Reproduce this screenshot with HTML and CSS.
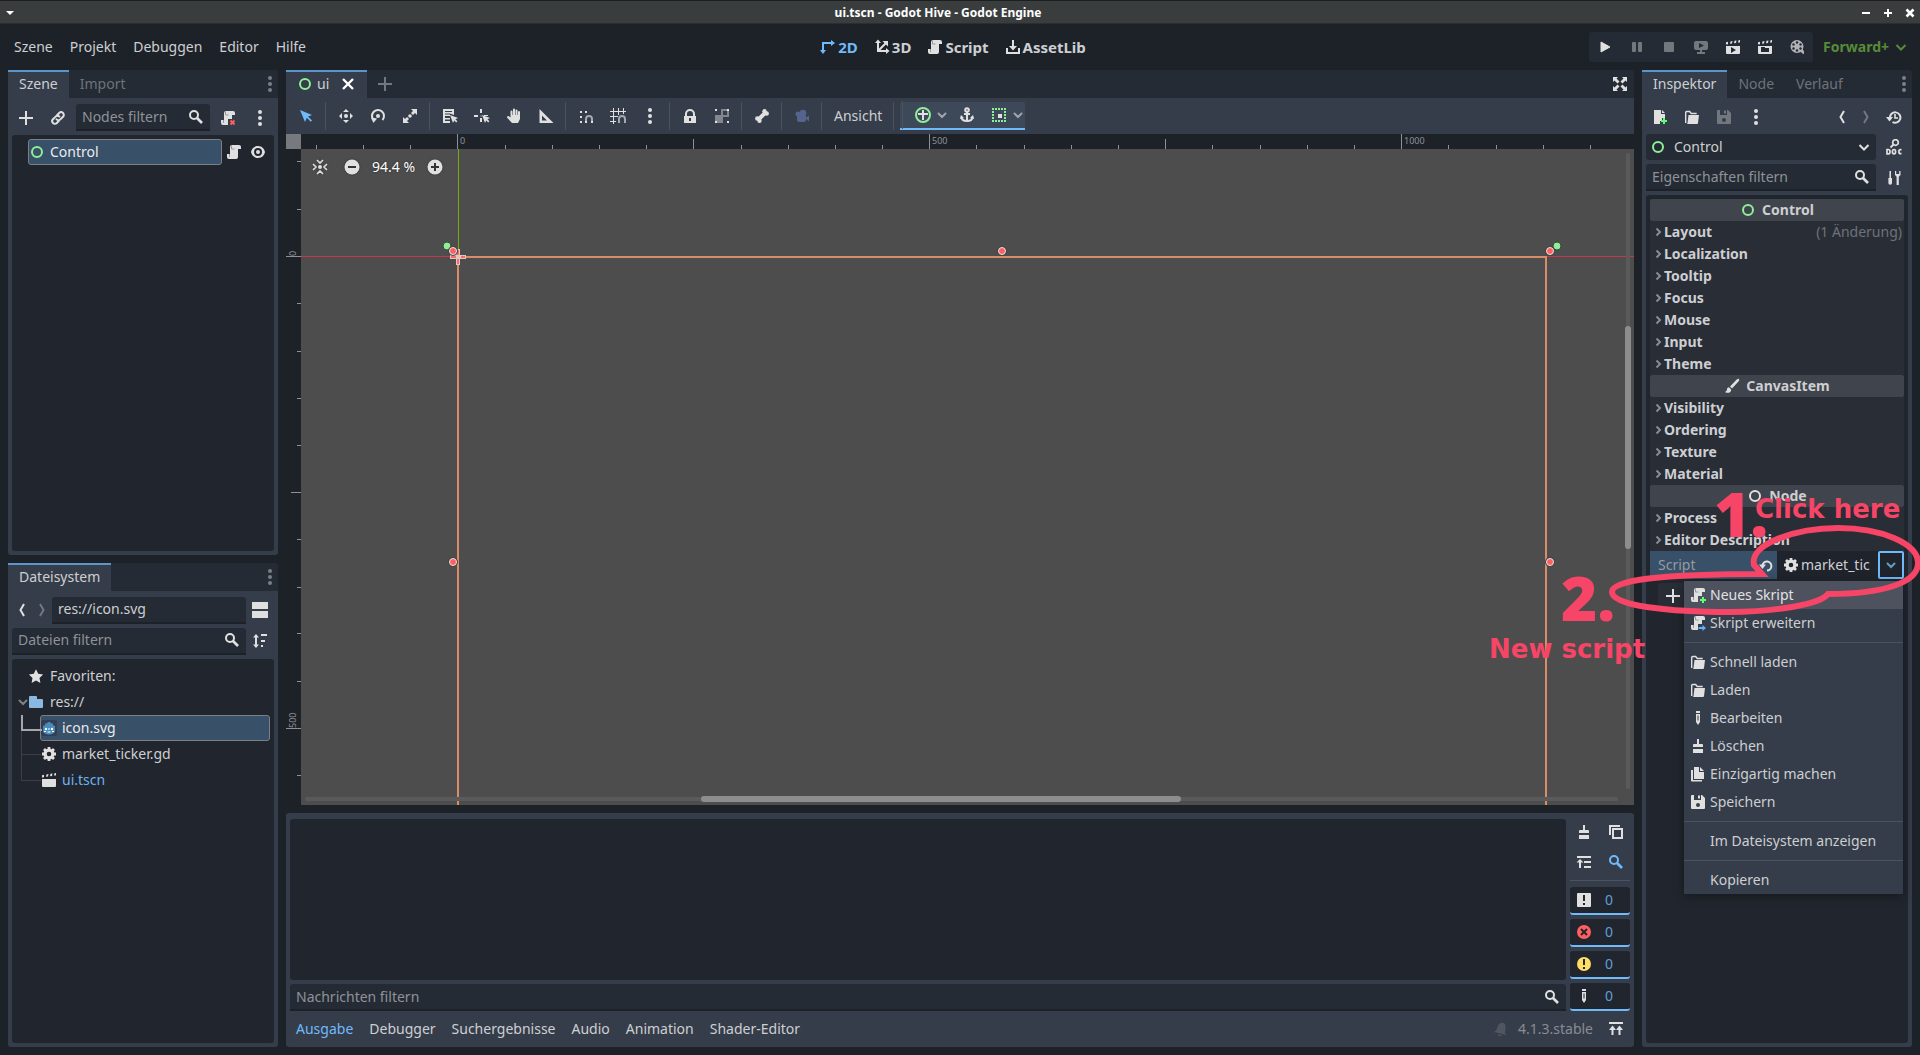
FILE: index.html
```html
<!DOCTYPE html>
<html lang="de">
<head>
<meta charset="utf-8">
<title>ui.tscn - Godot Hive - Godot Engine</title>
<link rel="stylesheet" href="styles.css">
</head>
<body>
<svg class="sprite" aria-hidden="true">
  <symbol id="ring" viewBox="0 0 16 16"><circle cx="8" cy="8" r="5" fill="none" stroke="currentColor" stroke-width="2"/></symbol>
  <symbol id="add" viewBox="0 0 16 16"><path d="M7 1v6H1v2h6v6h2V9h6V7H9V1z"/></symbol>
  <symbol id="close" viewBox="0 0 16 16"><path d="M3 3l10 10M13 3L3 13" fill="none" stroke="currentColor" stroke-width="2.4"/></symbol>
  <symbol id="link" viewBox="0 0 16 16"><g fill="none" stroke="currentColor" stroke-width="2" stroke-linecap="round"><path d="M7.2 5l2-2a2.6 2.6 0 0 1 3.8 3.8l-2.6 2.6a2.6 2.6 0 0 1-3.8 0"/><path d="M8.8 11l-2 2A2.6 2.6 0 0 1 3 9.200l2.600-2.600a2.600 2.600 0 0 1 3.800 0"/></g></symbol>
  <symbol id="search" viewBox="0 0 16 16"><g fill="none" stroke="currentColor"><circle cx="6" cy="6" r="4" stroke-width="2"/><path d="M9 9l5 5" stroke-width="2.600"/></g></symbol>
  <symbol id="script" viewBox="0 0 16 16"><path d="M6 1a2 2 0 0 0-2 2v7H1v3a2 2 0 0 0 2 2h7a2 2 0 0 0 2-2V5h3V3a2 2 0 0 0-2-2z"/><path d="M5.500 1.500v3.500h3M3.500 10v3" fill="none" stroke="#999" stroke-width="1"/></symbol>
  <symbol id="scriptx" viewBox="0 0 16 16"><path d="M6 1a2 2 0 0 0-2 2v7H1v3a2 2 0 0 0 2 2h5V9h4V5h3V3a2 2 0 0 0-2-2z"/><path d="M5.500 1.500v3.500h3M3.500 10v3" fill="none" stroke="#999"/><path d="M10.500 10.500l4 4m0-4l-4 4" fill="none" stroke="#ff5f5f" stroke-width="2"/></symbol>
  <symbol id="scriptadd" viewBox="0 0 16 16"><path d="M6 1a2 2 0 0 0-2 2v7H1v3a2 2 0 0 0 2 2h5V9h4V5h3V3a2 2 0 0 0-2-2z"/><path d="M5.500 1.500v3.500h3M3.500 10v3" fill="none" stroke="#999"/><path d="M13 10v6m-3-3h6" fill="none" stroke="#5fff75" stroke-width="2"/></symbol>
  <symbol id="scriptext" viewBox="0 0 16 16"><path d="M6 1a2 2 0 0 0-2 2v7H1v3a2 2 0 0 0 2 2h5V9h4V5h3V3a2 2 0 0 0-2-2z"/><path d="M5.500 1.500v3.500h3M3.500 10v3" fill="none" stroke="#999"/><path d="M8.500 12h4v-2l3.500 3-3.500 3v-2h-4z" fill="#5fb2ff"/></symbol>
  <symbol id="dots" viewBox="0 0 16 16"><circle cx="8" cy="2" r="2"/><circle cx="8" cy="8" r="2"/><circle cx="8" cy="14" r="2"/></symbol>
  <symbol id="eye" viewBox="0 0 16 16"><path d="M8 2C4 2 1.600 5 1 8c.6 3 3 6 7 6s6.400-3 7-6c-.6-3-3-6-7-6zm0 2a4 4 0 0 1 0 8 4 4 0 0 1 0-8z"/><circle cx="8" cy="8" r="2"/></symbol>
  <symbol id="prev" viewBox="0 0 16 16"><path d="M10 2L6.500 8 10 14" fill="none" stroke="currentColor" stroke-width="2"/></symbol>
  <symbol id="next" viewBox="0 0 16 16"><path d="M6 2l3.500 6L6 14" fill="none" stroke="currentColor" stroke-width="2"/></symbol>
  <symbol id="caret" viewBox="0 0 12 12"><path d="M2.500 4.500L6 8l3.500-3.500" fill="none" stroke="currentColor" stroke-width="2" stroke-linecap="round"/></symbol>
  <symbol id="chevron" viewBox="0 0 16 16"><path d="M3.500 6L8 10.500 12.500 6" fill="none" stroke="currentColor" stroke-width="2"/></symbol>
  <symbol id="fold" viewBox="0 0 12 12"><path d="M4.500 2.500L8 6 4.500 9.500" fill="none" stroke="currentColor" stroke-width="2"/></symbol>
  <symbol id="split" viewBox="0 0 16 16"><path d="M0 0h16v7H0zM0 9h16v7H0z"/></symbol>
  <symbol id="sort" viewBox="0 0 16 16"><path d="M4 1l3 3.500H5v7h2L4 15l-3-3.500h2v-7H1zM9 1h6v2H9zM9 7h4v2H9zM9 12h2v2H9z"/></symbol>
  <symbol id="star" viewBox="0 0 16 16"><path d="M8 1.200l2.200 4.500 4.900.7-3.600 3.500.9 5L8 12.500l-4.400 2.400.9-5L.9 6.400l4.900-.7z"/></symbol>
  <symbol id="folder" viewBox="0 0 16 16"><path d="M2 2a1 1 0 0 0-1 1v10a1 1 0 0 0 1 1h12a1 1 0 0 0 1-1V6a1 1 0 0 0-1-1H9V3a1 1 0 0 0-1-1z"/></symbol>
  <symbol id="godot" viewBox="0 0 16 16"><rect width="16" height="16" rx="2" fill="#363d52"/><path d="M2 6l2-1 .5-2 1.500.6L7 2h2l1 1.600 1.500-.6.5 2 2 1v5c0 2-3 3.500-6 3.500S2 13 2 11z" fill="#478cbf"/><circle cx="5" cy="9" r="1.200" fill="#fff"/><circle cx="11" cy="9" r="1.200" fill="#fff"/><path d="M8 8v2M3 11.500h2m1.500.5h3m1.500-.5h2" stroke="#fff" fill="none"/></symbol>
  <symbol id="gear" viewBox="0 0 16 16"><circle cx="8" cy="8" r="3.900" fill="none" stroke="currentColor" stroke-width="3.200"/><path d="M8 1v3M8 12v3M1 8h3M12 8h3M3 3l2 2M11 11l2 2M13 3l-2 2M5 11l-2 2" fill="none" stroke="currentColor" stroke-width="2.800"/></symbol>
  <symbol id="scene" viewBox="0 0 16 16"><path d="M1 7h14v7a1 1 0 0 1-1 1H2a1 1 0 0 1-1-1zM1 5.500V3.200l2-.4v2.400zM5 4.800l.5-2.400 2-.3L7 4.500zM9 4.200l.5-2.400 2-.3-.5 2.400zM13 3.600l.5-2.400 1.500-.2v2.400z"/></symbol>
  <symbol id="cursor" viewBox="0 0 16 16"><path d="M2 2l5 12 1.800-4.200 4 4 1.200-1.200-4-4L14 7z"/></symbol>
  <symbol id="move" viewBox="0 0 16 16"><path d="M8 1L5 4h6zM8 15l-3-3h6zM1 8l3-3v6zM15 8l-3-3v6z"/><circle cx="8" cy="8" r="2"/></symbol>
  <symbol id="rotate" viewBox="0 0 16 16"><path d="M4 12.500A6 6 0 1 1 12.500 12" fill="none" stroke="currentColor" stroke-width="2"/><path d="M1 9.500l6 1-3.500 4.500z"/><circle cx="8" cy="8" r="2"/></symbol>
  <symbol id="scale" viewBox="0 0 16 16"><path d="M9 1h6v6l-2-2-2 2-2-2 2-2zM7 15H1V9l2 2 2-2 2 2-2 2z"/><circle cx="8" cy="8" r="1.800"/></symbol>
  <symbol id="list" viewBox="0 0 16 16"><path d="M1 1h11v6L8 5.500H3v1h5V8H3v2h5v1.500H3V13h5v2H1zM3 3v1h7V3z" fill-rule="evenodd"/><path d="M8 7l3 8 1.200-2.600 2 2 1.200-1.200-2-2L16 10z"/></symbol>
  <symbol id="pivot" viewBox="0 0 16 16"><path d="M6 1h2v4H6zM0 7h4v2H0zM10 7h4v1h-4zM6 10h2v4H6zM6.500 7.500h1v1h-1z"/><path d="M8 7l3 8 1.200-2.600 2 2 1.200-1.200-2-2L16 10z"/></symbol>
  <symbol id="hand" viewBox="0 0 16 16"><path d="M7 1.500a1 1 0 0 1 2 0V7h.5V2.500a1 1 0 0 1 2 0V7h.5V4a1 1 0 0 1 2 0v7l-2 4H6L1.200 9.800a1.200 1.200 0 0 1 1.800-1.500L4.500 9.500V3.500a1 1 0 0 1 2 0V7H7z"/></symbol>
  <symbol id="ruler" viewBox="0 0 16 16"><path d="M1.500 1v14h14zM4 7.500l5 5H4z" fill-rule="evenodd"/></symbol>
  <symbol id="snap" viewBox="0 0 16 16"><path d="M2 3h2v2H2zM7 3h2v2H7zM2 8h2v2H2zM2 13h2v2H2z"/><path d="M8 15v-4a3 3 0 0 1 6 0v4" fill="none" stroke="#a5a8ae" stroke-width="2"/><path d="M7 13h2v2H7zM13 13h2v2h-2z"/></symbol>
  <symbol id="grid" viewBox="0 0 16 16"><path d="M0 3.500h16M0 8.500h8M0 13.500h6M3.500 0v16M8.500 0v7M13.500 0v6" fill="none" stroke="currentColor"/><path d="M9 15v-4a3 3 0 0 1 6 0v4" fill="none" stroke="#a5a8ae" stroke-width="2"/></symbol>
  <symbol id="lock" viewBox="0 0 16 16"><path d="M8 1a5 5 0 0 0-5 5v2H2v7h12V8h-1V6a5 5 0 0 0-5-5zm0 2a3 3 0 0 1 3 3v2H5V6a3 3 0 0 1 3-3zM7 10h2v3H7z" fill-rule="evenodd"/></symbol>
  <symbol id="group" viewBox="0 0 16 16"><path d="M7 1h8v8H9v6H1V7h6zM9 3v4h4V3z" opacity=".45" fill-rule="evenodd"/><path d="M1 1h2v2H1zM13 1h2v2h-2zM1 13h2v2H1zM13 13h2v2h-2z"/></symbol>
  <symbol id="bone" viewBox="0 0 16 16"><path d="M4.500 11.500l7-7" stroke="currentColor" stroke-width="4"/><circle cx="3.300" cy="10.500" r="2.200"/><circle cx="5.500" cy="12.700" r="2.200"/><circle cx="10.500" cy="3.300" r="2.200"/><circle cx="12.700" cy="5.500" r="2.200"/></symbol>
  <symbol id="camera" viewBox="0 0 16 16"><circle cx="4" cy="6" r="2.500"/><circle cx="9" cy="5" r="3.300"/><rect x="3" y="6" width="9" height="8" rx="2"/><path d="M11 10l4-2.500v6z"/></symbol>
  <symbol id="anchors" viewBox="0 0 16 16"><circle cx="8" cy="8" r="7" fill="none" stroke="#8eef97" stroke-width="2"/><path d="M7 3h2v3h4v2H9v5H7V8H3V6h4z"/></symbol>
  <symbol id="anchor" viewBox="0 0 16 16"><g fill="none" stroke="currentColor" stroke-width="2"><circle cx="8" cy="3" r="1.800"/><path d="M8 5v9M5 7h6M2.500 9.500c0 3 2.500 4.500 5.500 4.500s5.500-1.500 5.500-4.500"/></g><path d="M1 12l1-4 3 3zM15 12l-1-4-3 3z"/></symbol>
  <symbol id="container" viewBox="0 0 16 16"><path d="M1 1h2v2H1zM4 1h2v2H4zM7 1h2v2H7zM10 1h2v2h-2zM13 1h2v2h-2zM1 4h2v2H1zM1 7h2v2H1zM1 10h2v2H1zM13 4h2v2h-2zM13 7h2v2h-2zM13 10h2v2h-2zM1 13h2v2H1zM4 13h2v2H4zM7 13h2v2H7zM10 13h2v2h-2zM13 13h2v2h-2z" fill="#8eef97"/><path d="M7 7h4v4H7z"/></symbol>
  <symbol id="expand" viewBox="0 0 16 16"><path d="M1 1h5L4.500 2.500l3 3-2 2-3-3L1 6zM15 1v5l-1.500-1.500-3 3-2-2 3-3L10 1zM1 15v-5l1.500 1.500 3-3 2 2-3 3L6 15zM15 15h-5l1.500-1.500-3-3 2-2 3 3L15 10z"/></symbol>
  <symbol id="center" viewBox="0 0 16 16"><circle cx="8" cy="8" r="2"/><path d="M5 1l3 3 3-3M5 15l3-3 3 3M1 5l3 3-3 3M15 5l-3 3 3 3" fill="none" stroke="currentColor" stroke-width="1.600"/></symbol>
  <symbol id="minus" viewBox="0 0 16 16"><circle cx="8" cy="8" r="7.500"/><path d="M4 7h8v2H4z" fill="#333"/></symbol>
  <symbol id="plus" viewBox="0 0 16 16"><circle cx="8" cy="8" r="7.500"/><path d="M4 7h3V4h2v3h3v2H9v3H7V9H4z" fill="#333"/></symbol>
  <symbol id="two" viewBox="0 0 16 16"><path d="M3 12V4h9" fill="none" stroke="currentColor" stroke-width="2"/><path d="M0 11h6l-3 4zM11 1v6l4-3z"/></symbol>
  <symbol id="three" viewBox="0 0 16 16"><path d="M4 3v9h9M4 12l8-8" fill="none" stroke="currentColor" stroke-width="2"/><path d="M1 4h6L4 .500zM12 9v6l3.500-3zM8.500 2H14v5.500z"/></symbol>
  <symbol id="download" viewBox="0 0 16 16"><path d="M7 1h2v6h3l-4 4.500L4 7h3zM1 9h2v4h10V9h2v6H1z"/></symbol>
  <symbol id="play" viewBox="0 0 16 16"><path d="M4 3v10l9-5z" stroke="currentColor" stroke-width="1" stroke-linejoin="round"/></symbol>
  <symbol id="pause" viewBox="0 0 16 16"><rect x="3" y="3" width="4" height="10" rx="1"/><rect x="9" y="3" width="4" height="10" rx="1"/></symbol>
  <symbol id="stop" viewBox="0 0 16 16"><rect x="3" y="3" width="10" height="10" rx="1"/></symbol>
  <symbol id="remote" viewBox="0 0 16 16"><path d="M3 2h10a2 2 0 0 1 2 2v5a2 2 0 0 1-2 2H9v2h3v2H4v-2h3v-2H3a2 2 0 0 1-2-2V4a2 2 0 0 1 2-2zm3 2v5l5-2.500z" fill-rule="evenodd"/></symbol>
  <symbol id="playscene" viewBox="0 0 16 16"><path d="M1 7h14v7a1 1 0 0 1-1 1H2a1 1 0 0 1-1-1zm5 1v6l5-3zM1 5.500V3.200l2-.4v2.400zM5 4.800l.5-2.400 2-.3L7 4.500zM9 4.200l.5-2.400 2-.3-.5 2.400zM13 3.600l.5-2.400 1.500-.2v2.400z" fill-rule="evenodd"/></symbol>
  <symbol id="playcustom" viewBox="0 0 16 16"><path d="M1 7h14v7a1 1 0 0 1-1 1H2a1 1 0 0 1-1-1zm3 1v5h8V9H8V8zM1 5.500V3.200l2-.4v2.400zM5 4.800l.5-2.400 2-.3L7 4.500zM9 4.200l.5-2.400 2-.3-.5 2.400zM13 3.600l.5-2.400 1.500-.2v2.400z" fill-rule="evenodd"/></symbol>
  <symbol id="movie" viewBox="0 0 16 16"><circle cx="8" cy="7.500" r="6.500"/><path d="M11 13c2 0 2 2 4 2v-2.500L13 9z"/><g fill="#252b34"><circle cx="8" cy="3.500" r="1.200"/><circle cx="4.500" cy="5.500" r="1.200"/><circle cx="11.500" cy="5.500" r="1.200"/><circle cx="4.500" cy="9.500" r="1.200"/><circle cx="11.500" cy="9.500" r="1.200"/><circle cx="8" cy="11.500" r="1.200"/></g></symbol>
  <symbol id="newfile" viewBox="0 0 16 16"><path d="M2 1h7v4h4v4h-3v3H8v3H2zM10 1l3 3h-3z"/><path d="M12 9v6m-3-3h6" fill="none" stroke="#5fff75" stroke-width="2"/></symbol>
  <symbol id="open" viewBox="0 0 16 16"><path d="M1.700 14V3.500a1 1 0 0 1 1-1h3l1.500 2h5.500" fill="none" stroke="currentColor" stroke-width="1.400"/><path d="M4.500 6H15l-1 8a1 1 0 0 1-1 1H2.500a1 1 0 0 0 1-1z"/></symbol>
  <symbol id="save" viewBox="0 0 16 16"><path d="M2 1a1 1 0 0 0-1 1v12a1 1 0 0 0 1 1h12a1 1 0 0 0 1-1V4l-3-3zm2 0h7v5H4zm4 8a2 2 0 0 1 0 4 2 2 0 0 1 0-4z" fill-rule="evenodd"/><path d="M8 1.500h2v3H8z"/></symbol>
  <symbol id="history" viewBox="0 0 16 16"><path d="M4 9a5.200 5.200 0 1 1 2.500 4" fill="none" stroke="currentColor" stroke-width="2"/><path d="M0 8h7l-3.500 4.500z"/><path d="M9 5v4h3" fill="none" stroke="currentColor" stroke-width="1.600"/></symbol>
  <symbol id="doc" viewBox="0 0 16 16"><circle cx="9.500" cy="3.500" r="2.800" fill="none" stroke="currentColor" stroke-width="1.700"/><path d="M7.500 5.500L4.500 8.500" stroke="currentColor" stroke-width="1.800"/><path d="M1 10.500h1.500q1.500 0 1.500 2.200t-1.500 2.200H1zM8 10.500q-1.600 0-1.600 2.200T8 14.900q1.600 0 1.600-2.200T8 10.500zM15.500 10.700h-1q-1.600 0-1.600 2t1.600 2h1" fill="none" stroke="currentColor" stroke-width="1.700"/></symbol>
  <symbol id="tools" viewBox="0 0 16 16"><path d="M3.500 1h1.500v7H6v5a1.800 1.800 0 0 1-3.600 0V8h1zM9 1v4l1.600 1.800V15h2.200V6.800L14.500 5V1h-1.300v3h-3V1z"/></symbol>
  <symbol id="brush" viewBox="0 0 16 16"><path d="M15 1.200c-1-.8-2 0-3 1L6 8.500 8 10.500 14 4c1-1 1.600-2 1-2.800zM5 9.300c-1.500.2-2 1-2 2.200S2 13.500 1 14c2 1.500 5 1 6-1 .3-.8 0-1.300-.3-2z"/></symbol>
  <symbol id="revert" viewBox="0 0 16 16"><path d="M4.500 8A4.500 4.500 0 1 1 9 13.500" fill="none" stroke="currentColor" stroke-width="2"/><path d="M1 7.500h7L4.500 12z"/></symbol>
  <symbol id="edit" viewBox="0 0 16 16"><path d="M6 1h4v2H6zM6 4h4v8l-2 3-2-3zm1.500 1.500v5h1v-5z" fill-rule="evenodd"/></symbol>
  <symbol id="clear" viewBox="0 0 16 16"><path d="M7 1h2v5h3a1 1 0 0 1 1 1v2H3V7a1 1 0 0 1 1-1h3zM3 11h10v3h0v1H3V14z"/></symbol>
  <symbol id="unique" viewBox="0 0 16 16"><path d="M4 1h5v5h5v7H4zM10 1l4 4h-4zM1 4h2v10h9v1.500H2a1 1 0 0 1-1-1z"/></symbol>
  <symbol id="copy" viewBox="0 0 16 16"><path d="M5 5h9v9H5z" fill="none" stroke="currentColor" stroke-width="2"/><path d="M2 11V2h10" fill="none" stroke="currentColor" stroke-width="2"/></symbol>
  <symbol id="collapse" viewBox="0 0 16 16"><path d="M1 2h14v2H1zM4 5L.5 8.500H3V14h2V8.500h2.500zM8 7h7v2H8zM8 12h7v2H8z"/></symbol>
  <symbol id="message" viewBox="0 0 16 16"><path d="M2 1h12a1 1 0 0 1 1 1v12a1 1 0 0 1-1 1H2a1 1 0 0 1-1-1V2a1 1 0 0 1 1-1zm5 2v6h2V3zm0 8v2h2v-2z" fill-rule="evenodd"/></symbol>
  <symbol id="error" viewBox="0 0 16 16"><circle cx="8" cy="8" r="7" fill="#ff5f5f"/><path d="M5 5l6 6m0-6l-6 6" stroke="#21262e" stroke-width="2"/></symbol>
  <symbol id="warning" viewBox="0 0 16 16"><circle cx="8" cy="8" r="7" fill="#ffdd65"/><path d="M7 3h2v6H7zM7 11h2v2H7z" fill="#21262e"/></symbol>
  <symbol id="bell" viewBox="0 0 16 16"><path d="M9 2c3-1 5 1 4.500 4L13 12l1.500 2L2 11c2-1 3-3 3.500-5S7 2.500 9 2zM6 13l4 1c-1 2-4 1.500-4-1z"/></symbol>
  <symbol id="raise" viewBox="0 0 16 16"><path d="M1 1h14v2H1zM4.500 4.500L8 9H5.500v5h-2V9H1zM11.500 4.500L15 9h-2.500v5h-2V9H8z"/></symbol>
</svg>

<header class="titlebar">
  <svg class="wm" viewBox="0 0 12 12"><path d="M2 4h8L6 8z"/></svg>
  <h1>ui.tscn - Godot Hive - Godot Engine</h1>
  <div class="wm-buttons">
    <button aria-label="Minimieren"><svg class="wm" viewBox="0 0 12 12"><path d="M2 5h8v2H2z"/></svg></button>
    <button aria-label="Maximieren"><svg class="wm" viewBox="0 0 12 12"><path d="M5 2h2v3h3v2H7v3H5V7H2V5h3z"/></svg></button>
    <button aria-label="Schließen"><svg class="wm" viewBox="0 0 12 12"><path d="M2.500 2.500l7 7m0-7l-7 7" stroke="#fff" stroke-width="2.600"/></svg></button>
  </div>
</header>

<div class="menubar">
  <nav class="menus">
    <button>Szene</button><button>Projekt</button><button>Debuggen</button><button>Editor</button><button>Hilfe</button>
  </nav>
  <nav class="screens">
    <button class="on"><svg class="icon"><use href="#two"/></svg>2D</button>
    <button><svg class="icon"><use href="#three"/></svg>3D</button>
    <button><svg class="icon"><use href="#script"/></svg>Script</button>
    <button><svg class="icon"><use href="#download"/></svg>AssetLib</button>
  </nav>
  <div class="run">
    <div class="runbar">
      <button aria-label="Abspielen"><svg class="icon"><use href="#play"/></svg></button>
      <button aria-label="Pause" class="off"><svg class="icon"><use href="#pause"/></svg></button>
      <button aria-label="Stopp" class="off"><svg class="icon"><use href="#stop"/></svg></button>
      <button aria-label="Remote" class="off"><svg class="icon"><use href="#remote"/></svg></button>
      <button aria-label="Szene abspielen"><svg class="icon"><use href="#playscene"/></svg></button>
      <button aria-label="Andere Szene abspielen"><svg class="icon"><use href="#playcustom"/></svg></button>
      <button aria-label="Filmmodus" class="soft"><svg class="icon"><use href="#movie"/></svg></button>
    </div>
    <button class="renderer">Forward+<svg class="icon"><use href="#chevron"/></svg></button>
  </div>
</div>

<main class="workspace">
  <div class="column">
    <section class="dock">
      <div class="tabs">
        <button class="tab on">Szene</button><button class="tab">Import</button>
        <button class="tabmenu" aria-label="Dock-Menü"><svg class="icon"><use href="#dots"/></svg></button>
      </div>
      <div class="dockbody">
        <div class="row">
          <button class="ib" aria-label="Hinzufügen"><svg class="icon"><use href="#add"/></svg></button>
          <button class="ib" aria-label="Instanziieren"><svg class="icon"><use href="#link"/></svg></button>
          <label class="field"><input type="text" placeholder="Nodes filtern" aria-label="Nodes filtern"><svg class="icon"><use href="#search"/></svg></label>
          <button class="ib" aria-label="Skript lösen"><svg class="icon"><use href="#scriptx"/></svg></button>
          <button class="ib" aria-label="Mehr"><svg class="icon"><use href="#dots"/></svg></button>
        </div>
        <div class="tree">
          <div class="item scene-item">
            <button class="node sel"><svg class="icon green"><use href="#ring"/></svg>Control</button>
            <button class="mini" aria-label="Skript öffnen"><svg class="icon"><use href="#script"/></svg></button>
            <button class="mini" aria-label="Sichtbarkeit"><svg class="icon"><use href="#eye"/></svg></button>
          </div>
        </div>
      </div>
    </section>

    <section class="dock files">
      <div class="tabs">
        <button class="tab on">Dateisystem</button>
        <button class="tabmenu" aria-label="Dock-Menü"><svg class="icon"><use href="#dots"/></svg></button>
      </div>
      <div class="dockbody">
        <div class="row">
          <button class="nav" aria-label="Zurück"><svg class="icon"><use href="#prev"/></svg></button>
          <button class="nav off" aria-label="Vor"><svg class="icon"><use href="#next"/></svg></button>
          <label class="field"><input type="text" value="res://icon.svg" aria-label="Pfad"></label>
          <button class="ib" aria-label="Geteilte Ansicht"><svg class="icon"><use href="#split"/></svg></button>
        </div>
        <div class="row">
          <label class="field"><input type="text" placeholder="Dateien filtern" aria-label="Dateien filtern"><svg class="icon"><use href="#search"/></svg></label>
          <button class="ib" aria-label="Sortieren"><svg class="icon"><use href="#sort"/></svg></button>
        </div>
        <div class="tree">
          <div class="item"><button class="node top"><svg class="icon"><use href="#star"/></svg>Favoriten:</button></div>
          <div class="item"><button class="node top"><svg class="fold"><use href="#caret"/></svg><svg class="icon blue"><use href="#folder"/></svg>res://</button></div>
          <div class="item file hot"><button class="node sel"><svg class="icon"><use href="#godot"/></svg>icon.svg</button></div>
          <div class="item file"><button class="node"><svg class="icon"><use href="#gear"/></svg>market_ticker.gd</button></div>
          <div class="item file"><button class="node link"><svg class="icon"><use href="#scene"/></svg>ui.tscn</button></div>
        </div>
      </div>
    </section>
  </div>

  <div class="column">
    <section class="editor">
      <div class="tabs">
        <button class="tab on scene-tab"><svg class="icon green"><use href="#ring"/></svg>ui<svg class="icon bright"><use href="#close"/></svg></button>
        <button class="newtab" aria-label="Neue Szene"><svg class="icon"><use href="#add"/></svg></button>
        <button class="full" aria-label="Ablenkungsfrei"><svg class="icon"><use href="#expand"/></svg></button>
      </div>
      <div class="toolbar">
        <button class="ib accent" aria-label="Auswählen"><svg class="icon"><use href="#cursor"/></svg></button>
        <span class="sep"></span>
        <button class="ib" aria-label="Verschieben"><svg class="icon"><use href="#move"/></svg></button>
        <button class="ib" aria-label="Rotieren"><svg class="icon"><use href="#rotate"/></svg></button>
        <button class="ib" aria-label="Skalieren"><svg class="icon"><use href="#scale"/></svg></button>
        <span class="sep"></span>
        <button class="ib" aria-label="Liste"><svg class="icon"><use href="#list"/></svg></button>
        <button class="ib" aria-label="Pivot"><svg class="icon"><use href="#pivot"/></svg></button>
        <button class="ib" aria-label="Schwenken"><svg class="icon"><use href="#hand"/></svg></button>
        <button class="ib" aria-label="Lineal"><svg class="icon"><use href="#ruler"/></svg></button>
        <span class="sep"></span>
        <button class="ib" aria-label="Einrasten"><svg class="icon"><use href="#snap"/></svg></button>
        <button class="ib" aria-label="Raster"><svg class="icon"><use href="#grid"/></svg></button>
        <button class="ib" aria-label="Einrastoptionen"><svg class="icon"><use href="#dots"/></svg></button>
        <span class="sep"></span>
        <button class="ib" aria-label="Sperren"><svg class="icon"><use href="#lock"/></svg></button>
        <button class="ib" aria-label="Gruppieren"><svg class="icon"><use href="#group"/></svg></button>
        <span class="sep"></span>
        <button class="ib" aria-label="Skelett"><svg class="icon"><use href="#bone"/></svg></button>
        <span class="sep"></span>
        <button class="ib cam" aria-label="Kamera"><svg class="icon"><use href="#camera"/></svg></button>
        <span class="sep"></span>
        <button class="view">Ansicht</button>
        <span class="sep"></span>
        <div class="context">
          <span class="sep"></span>
          <button class="drop" aria-label="Ankervorlagen"><svg class="icon"><use href="#anchors"/></svg><svg class="fold"><use href="#caret"/></svg></button>
          <button class="ib" aria-label="Anker"><svg class="icon"><use href="#anchor"/></svg></button>
          <button class="drop" aria-label="Container"><svg class="icon"><use href="#container"/></svg><svg class="fold"><use href="#caret"/></svg></button>
        </div>
      </div>
      <div class="viewport">
        <div class="corner"></div>
        <svg class="hruler"><path d="M15.500 11v4M62.500 11v4M109.500 11v4M156.500 0v15M204.500 11v4M251.500 11v4M298.500 11v4M345.500 11v4M392.500 5v10M440.500 11v4M487.500 11v4M534.500 11v4M581.500 11v4M628.500 0v15M675.500 11v4M723.500 11v4M770.500 11v4M817.500 11v4M864.500 5v10M911.500 11v4M959.500 11v4M1006.500 11v4M1053.500 11v4M1100.500 0v15M1147.500 11v4M1195.500 11v4M1242.500 11v4M1289.500 11v4"/><text x="159" y="10">0</text><text x="631" y="10">500</text><text x="1103" y="10">1000</text></svg>
        <svg class="vruler"><path d="M11 12.500h4M11 60.500h4M0 107.500h15M11 154.500h4M11 202.500h4M11 249.500h4M11 296.500h4M5 343.500h10M11 390.500h4M11 438.500h4M11 484.500h4M11 532.500h4M0 579.500h15M11 626.500h4"/><text transform="translate(10 107) rotate(-90)">0</text><text transform="translate(10 579) rotate(-90)">500</text></svg>
        <div class="canvas">
          <svg class="drawing">
            <path d="M0 107.500h3000" stroke="#c5374c"/>
            <path d="M157.500 0v107" stroke="#76ad0d"/>
            <path d="M157 3000V108H1245V3000" stroke="#d98c68" stroke-width="2" fill="none"/>
            <path d="M149 108h16M157 100v16" stroke="#ddc9c4" stroke-width="4"/>
            <path d="M150 108h5M160 108h4M157 101v5M157 110v5" stroke="#ff6868" stroke-width="2"/>
            <g fill="#8eef97" stroke="#3b453c"><circle cx="146" cy="97" r="4"/><circle cx="1256" cy="97" r="4"/></g>
            <g fill="#444"><circle cx="152" cy="102" r="5"/><circle cx="701" cy="102" r="5"/><circle cx="1249" cy="102" r="5"/><circle cx="152" cy="413" r="5"/><circle cx="1249" cy="413" r="5"/></g>
            <g fill="#ff5f5f" stroke="#e9e4e4"><circle cx="152" cy="102" r="3.500"/><circle cx="701" cy="102" r="3.500"/><circle cx="1249" cy="102" r="3.500"/><circle cx="152" cy="413" r="3.500"/><circle cx="1249" cy="413" r="3.500"/></g>
          </svg>
          <div class="zoom">
            <button class="ib" aria-label="Zentrieren"><svg class="icon"><use href="#center"/></svg></button>
            <button class="ib" aria-label="Verkleinern"><svg class="icon"><use href="#minus"/></svg></button>
            <button class="percent">94.4 %</button>
            <button class="ib" aria-label="Vergrößern"><svg class="icon"><use href="#plus"/></svg></button>
          </div>
          <div class="vscroll"></div><div class="vthumb"></div>
          <div class="hscroll"></div><div class="hthumb"></div>
        </div>
      </div>
    </section>

    <section class="bottom">
      <div class="output">
        <div class="log">
          <div class="messages"></div>
          <label class="field"><input type="text" placeholder="Nachrichten filtern" aria-label="Nachrichten filtern"><svg class="icon"><use href="#search"/></svg></label>
        </div>
        <div class="side">
          <div class="pair"><button class="ib" aria-label="Leeren"><svg class="icon"><use href="#clear"/></svg></button><button class="ib" aria-label="Kopieren"><svg class="icon"><use href="#copy"/></svg></button></div>
          <div class="pair"><button class="ib" aria-label="Zusammenfassen"><svg class="icon"><use href="#collapse"/></svg></button><button class="ib accent" aria-label="Suchen"><svg class="icon"><use href="#search"/></svg></button></div>
          <hr>
          <button class="count"><svg class="icon"><use href="#message"/></svg>0</button>
          <button class="count"><svg class="icon"><use href="#error"/></svg>0</button>
          <button class="count"><svg class="icon"><use href="#warning"/></svg>0</button>
          <button class="count"><svg class="icon"><use href="#edit"/></svg>0</button>
        </div>
      </div>
      <div class="panels">
        <button class="on">Ausgabe</button><button>Debugger</button><button>Suchergebnisse</button><button>Audio</button><button>Animation</button><button>Shader-Editor</button>
        <svg class="icon bell"><use href="#bell"/></svg>
        <span class="version">4.1.3.stable</span>
        <button class="ib" aria-label="Panel erweitern"><svg class="icon"><use href="#raise"/></svg></button>
      </div>
    </section>
  </div>

  <div class="column">
    <section class="dock inspector">
      <div class="tabs">
        <button class="tab on">Inspektor</button><button class="tab">Node</button><button class="tab">Verlauf</button>
        <button class="tabmenu" aria-label="Dock-Menü"><svg class="icon"><use href="#dots"/></svg></button>
      </div>
      <div class="dockbody">
        <div class="row">
          <button class="ib" aria-label="Neue Ressource"><svg class="icon"><use href="#newfile"/></svg></button>
          <button class="ib" aria-label="Laden"><svg class="icon"><use href="#open"/></svg></button>
          <button class="ib off" aria-label="Speichern"><svg class="icon"><use href="#save"/></svg></button>
          <button class="ib" aria-label="Mehr"><svg class="icon"><use href="#dots"/></svg></button>
          <span class="grow"></span>
          <button class="nav" aria-label="Zurück"><svg class="icon"><use href="#prev"/></svg></button>
          <button class="nav off" aria-label="Vor"><svg class="icon"><use href="#next"/></svg></button>
          <button class="ib" aria-label="Verlauf"><svg class="icon"><use href="#history"/></svg></button>
        </div>
        <div class="row object">
          <label class="field pick"><svg class="icon green"><use href="#ring"/></svg><select aria-label="Objekt"><option>Control</option></select><svg class="icon"><use href="#chevron"/></svg></label>
          <button class="ib" aria-label="Dokumentation"><svg class="icon"><use href="#doc"/></svg></button>
        </div>
        <div class="row">
          <label class="field"><input type="text" placeholder="Eigenschaften filtern" aria-label="Eigenschaften filtern"><svg class="icon"><use href="#search"/></svg></label>
          <button class="ib" aria-label="Werkzeuge"><svg class="icon"><use href="#tools"/></svg></button>
        </div>
        <div class="tree props">
          <h2><svg class="icon green"><use href="#ring"/></svg>Control</h2>
          <button class="prop"><svg class="fold"><use href="#fold"/></svg>Layout<span>(1 Änderung)</span></button>
          <button class="prop"><svg class="fold"><use href="#fold"/></svg>Localization</button>
          <button class="prop"><svg class="fold"><use href="#fold"/></svg>Tooltip</button>
          <button class="prop"><svg class="fold"><use href="#fold"/></svg>Focus</button>
          <button class="prop"><svg class="fold"><use href="#fold"/></svg>Mouse</button>
          <button class="prop"><svg class="fold"><use href="#fold"/></svg>Input</button>
          <button class="prop"><svg class="fold"><use href="#fold"/></svg>Theme</button>
          <h2><svg class="icon"><use href="#brush"/></svg>CanvasItem</h2>
          <button class="prop"><svg class="fold"><use href="#fold"/></svg>Visibility</button>
          <button class="prop"><svg class="fold"><use href="#fold"/></svg>Ordering</button>
          <button class="prop"><svg class="fold"><use href="#fold"/></svg>Texture</button>
          <button class="prop"><svg class="fold"><use href="#fold"/></svg>Material</button>
          <h2><svg class="icon"><use href="#ring"/></svg>Node</h2>
          <button class="prop"><svg class="fold"><use href="#fold"/></svg>Process</button>
          <button class="prop"><svg class="fold"><use href="#fold"/></svg>Editor Description</button>
          <div class="scriptrow">
            <div class="name">Script<svg class="icon"><use href="#revert"/></svg></div>
            <button class="res"><svg class="icon"><use href="#gear"/></svg>market_tic</button>
            <button class="open" aria-label="Optionen"><svg class="fold"><use href="#caret"/></svg></button>
            <div class="popup">
              <button class="hover"><svg class="icon"><use href="#scriptadd"/></svg>Neues Skript</button>
              <button><svg class="icon"><use href="#scriptext"/></svg>Skript erweitern</button>
              <hr>
              <button><svg class="icon"><use href="#open"/></svg>Schnell laden</button>
              <button><svg class="icon"><use href="#open"/></svg>Laden</button>
              <button><svg class="icon"><use href="#edit"/></svg>Bearbeiten</button>
              <button><svg class="icon"><use href="#clear"/></svg>Löschen</button>
              <button><svg class="icon"><use href="#unique"/></svg>Einzigartig machen</button>
              <button><svg class="icon"><use href="#save"/></svg>Speichern</button>
              <hr>
              <button class="plain">Im Dateisystem anzeigen</button>
              <hr>
              <button class="plain">Kopieren</button>
            </div>
          </div>
          <button class="meta" aria-label="Metadaten hinzufügen"><svg class="icon"><use href="#add"/></svg></button>
        </div>
      </div>
    </section>
  </div>
</main>

<div class="notes">
  <svg viewBox="0 0 320 100"><path d="M162 54L154 45C149 24 196 8 238 8C283 8 317 24 318 42C319 62 285 74 228 74C221 84 175 92 130 92C70 92 12 86 12 72C12 60 60 54 162 54z"/></svg>
  <span class="note n1">1.</span>
  <span class="note t1">Click here</span>
  <span class="note n2">2.</span>
  <span class="note t2">New script</span>
</div>
</body>
</html>
```
FILE: styles.css
```css
* { box-sizing: border-box; }
body {
  margin: 0;
  height: 100vh;
  display: flex;
  flex-direction: column;
  position: relative;
  overflow: hidden;
  background: #1d2229;
  color: #cdcfd2;
  font: 14px/20px "Noto Sans", sans-serif;
}
button, input, select {
  font: inherit;
  color: inherit;
  background: none;
  border: 0;
  padding: 0;
  margin: 0;
  white-space: nowrap;
}
hr { border: 0; margin: 0; }
.sprite { position: absolute; width: 0; height: 0; }
.icon { width: 16px; height: 16px; flex: none; fill: currentColor; color: #e0e0e0; }
.fold { width: 12px; height: 12px; flex: none; fill: currentColor; color: #a0a4aa; }
.icon.green { color: #8eef97; }
.icon.blue { color: #8ab8e0; }
.off .icon { color: #73777e; }
.soft .icon { color: #b0b2b5; }
.accent .icon { color: #70bafa; }
.grow { flex: 1; }

.titlebar {
  display: flex;
  align-items: center;
  height: 24px;
  padding: 2px 4px 0;
  background: #3a3d3e;
  border-top: 1px solid #1c1e1f;
  border-bottom: 1px solid #2b2e30;
  color: #fff;
}
.titlebar h1 { flex: 1; margin: 0; text-align: center; font-size: 12px; line-height: 20px; font-weight: 700; }
.wm { width: 12px; height: 12px; fill: #fff; display: block; }
.wm-buttons { display: flex; gap: 10px; }

.menubar {
  display: flex;
  align-items: center;
  height: 46px;
  padding: 0 8px;
}
.menus { display: flex; }
.menus button { padding: 0 11px 0 6px; }
.screens { flex: 1; display: flex; justify-content: center; gap: 16px; font-size: 15px; font-weight: 700; }
.screens button { display: flex; align-items: center; gap: 2px; }
.screens .on, .screens .on .icon { color: #70bafa; }
.run { display: flex; align-items: center; gap: 10px; }
.runbar { display: flex; gap: 16px; height: 30px; padding: 0 8px; align-items: center; background: #252b34; border-radius: 3px; }
.runbar button { display: flex; }
.renderer { display: flex; align-items: center; gap: 4px; padding-right: 3px; font-weight: 700; color: #588b39; }
.renderer .icon { color: inherit; }

.workspace {
  flex: 1;
  min-height: 0;
  display: grid;
  grid-template-columns: 270px minmax(0, 1fr) 270px;
  gap: 8px;
  padding: 0 8px 8px;
}
.column { display: flex; flex-direction: column; gap: 8px; min-height: 0; }
.dock { flex: 1 1 0; min-height: 0; display: flex; flex-direction: column; }
.tabs { display: flex; height: 28px; flex: none; align-items: stretch; background: #252b34; border-radius: 3px 3px 0 0; }
.tab { padding: 0 11px 2px; color: #6e737b; border-top: 2px solid transparent; }
.tab.on { background: #363d4a; color: #cdcfd2; border-top-color: #5a96ca; }
.tabmenu { margin-left: auto; display: flex; align-items: center; }
.tabmenu .icon { color: #7c7f85; }
.dockbody { flex: 1; min-height: 0; display: flex; flex-direction: column; gap: 4px; padding: 4px; background: #363d4a; border-radius: 0 0 3px 3px; }
.row { display: flex; align-items: center; gap: 4px; height: 27px; flex: none; }
.dockbody .row:first-child { height: 29px; padding-top: 2px; }
.inspector .row:first-child { height: 28px; }
.files .row { gap: 0; }
.ib { width: 28px; height: 26px; display: flex; align-items: center; justify-content: center; flex: none; }
.nav { width: 20px; height: 26px; display: flex; align-items: center; justify-content: center; flex: none; }
.field { flex: 1; min-width: 0; height: 27px; display: flex; align-items: center; padding: 0 6px; background: #252b34; border-bottom: 2px solid #1d2229; border-radius: 3px 3px 0 0; }
.field input { flex: 1; width: 0; min-width: 0; outline: 0; }
.field input::placeholder { color: #8f9298; opacity: 1; }
.field select { flex: 1; appearance: none; outline: 0; }
.object, .pick { height: 26px; }
.pick { padding: 0 4px; border-bottom: 0; border-radius: 3px; gap: 8px; }
.tree { flex: 1; min-height: 0; padding: 4px; background: #21262e; border-radius: 3px; }

.item { display: flex; height: 26px; position: relative; }
.node { display: flex; align-items: center; height: 26px; border: 1px solid transparent; border-radius: 3px; gap: 5px; position: relative; }
.node.sel { background: #385068; border-color: #7b8087; color: #e9ebed; flex: 1; }
.scene-item { padding-left: 12px; }
.mini { width: 24px; display: flex; align-items: center; justify-content: center; }
.node.top { padding-left: 11px; gap: 6px; }
.node.top .fold { position: absolute; left: 0; color: #7c8087; }
.file { padding-left: 24px; }
.file::before { content: ""; position: absolute; left: 5px; top: -13px; width: 19px; height: 26px; border-left: 1px solid #3b4048; border-bottom: 1px solid #3b4048; }
.file.hot::before { top: 0; height: 14px; border-left: 2px solid #a4a7ab; border-bottom: 2px solid #a4a7ab; z-index: 1; }
.link { color: #6db2ee; }

.editor { flex: 1; min-height: 0; display: flex; flex-direction: column; }
.scene-tab { display: flex; align-items: center; gap: 4px; }
.scene-tab .bright { margin-left: 7px; color: #fff; }
.newtab, .full { display: flex; align-items: center; padding: 0 10px; }
.newtab .icon { color: #73777e; }
.full { margin-left: auto; padding: 0 6px; }
.toolbar { display: flex; align-items: center; gap: 4px; height: 36px; flex: none; padding: 0 6px; background: #363d4a; }
.sep { width: 4px; height: 28px; flex: none; position: relative; }
.sep::before { content: ""; position: absolute; left: 1px; width: 1px; height: 100%; background: #4b5260; }
.cam .icon { color: #56638c; }
.view { padding: 0 6px; }
.context { display: flex; align-items: center; gap: 4px; height: 28px; padding-left: 1px; background: #3d4859; border-bottom: 2px solid #70bafa; border-radius: 2px 2px 0 0; }
.drop { display: flex; align-items: center; gap: 5px; padding: 0 1px 0 6px; }

.viewport { flex: 1; min-height: 0; display: grid; grid-template: 15px minmax(0, 1fr) / 15px minmax(0, 1fr); }
.corner { background: #76797e; }
.hruler, .vruler { display: block; width: 100%; height: 100%; overflow: hidden; }
.hruler path, .vruler path { stroke: #8e9195; fill: none; }
.hruler text, .vruler text { fill: #8e9195; font-size: 9px; }
.canvas { position: relative; background: #4d4d4d; overflow: hidden; }
.drawing { display: block; width: 100%; height: 100%; }
.zoom { position: absolute; left: 5px; top: 5px; display: flex; align-items: center; gap: 4px; color: #fff; }
.percent { padding: 0 2px; text-shadow: 0 0 2px #222; }
.zoom .icon { filter: drop-shadow(0 0 1px #333); }
.vscroll, .vthumb, .hscroll, .hthumb { position: absolute; border-radius: 3px; background: #5a5a5a; }
.vscroll { right: 4px; top: 4px; bottom: 16px; width: 4px; }
.vthumb { right: 3px; top: 27%; height: 34%; width: 6px; background: #8d8d8d; }
.hscroll { left: 4px; right: 16px; bottom: 4px; height: 4px; }
.hthumb { left: 30%; width: 36%; bottom: 3px; height: 6px; background: #8d8d8d; }

.bottom { flex: none; padding: 6px 4px 0; background: #363d4a; border-radius: 3px; }
.output { display: flex; gap: 4px; }
.log { flex: 1; display: flex; flex-direction: column; gap: 4px; }
.messages { flex: 1; background: #21262e; border-radius: 3px; }
.log .field { flex: none; }
.side { display: flex; flex-direction: column; gap: 4px; width: 60px; }
.pair { display: flex; gap: 4px; }
.side hr { height: 4px; background: linear-gradient(#4b5260, #4b5260) 0 1px / 100% 1px no-repeat; }
.count { display: flex; align-items: center; gap: 13px; height: 28px; padding: 0 6px; background: #21262e; color: #5f9fd6; border-bottom: 2px solid #70bafa; border-radius: 3px; }
.panels { display: flex; align-items: center; height: 36px; padding-left: 6px; gap: 16px; }
.panels .on { color: #70bafa; }
.bell { margin-left: auto; color: #50565f; }
.panels .version { color: #888c93; margin: 0 -7px 0 -6px; }

.props { padding: 4px; display: flex; flex-direction: column; }
.props h2 { margin: 0; height: 22px; flex: none; display: flex; align-items: center; justify-content: center; gap: 6px; font-size: 14px; font-weight: 700; background: #40444c; border-radius: 2px; }
.prop { display: flex; align-items: center; height: 22px; flex: none; padding: 0 2px; font-weight: 700; background: #292d36; }
.prop .fold { color: #888c93; }
.prop span { margin-left: auto; font-weight: 400; color: #6e727a; }
.scriptrow { display: flex; height: 28px; flex: none; position: relative; background: #1f232b; }
.name { width: 127px; display: flex; align-items: center; justify-content: space-between; padding: 0 3px 0 8px; background: #385068; color: #949ba3; }
.res { flex: 1; display: flex; align-items: center; gap: 2px; padding-left: 6px; }
.open { width: 26px; display: flex; align-items: center; justify-content: center; border: 2px solid #70bafa; border-radius: 2px; }
.open .fold { color: #5f9fc0; }
.meta { height: 26px; margin: 4px 8px 0; padding-left: 7px; display: flex; align-items: center; background: #292d36; border-radius: 3px; }
.popup { position: absolute; top: 30px; right: 1px; width: 219px; display: flex; flex-direction: column; background: #363d4a; box-shadow: 0 2px 10px rgba(0, 0, 0, .4); z-index: 2; }
.popup button { display: flex; align-items: center; height: 28px; padding: 0 6px; gap: 4px; }
.popup .hover { background: #4d525e; color: #e0e1e3; }
.popup .plain { padding-left: 26px; }
.popup hr { height: 11px; background: linear-gradient(#4b5260, #4b5260) 0 5px / 100% 1px no-repeat; }

.notes { position: absolute; top: 0; right: 0; width: 440px; height: 700px; pointer-events: none; z-index: 3; color: #f64566; overflow: hidden; }
.notes svg { position: absolute; right: 0; top: 520px; width: 320px; height: 100px; fill: none; stroke: #f64566; stroke-width: 6px; }
.note { position: absolute; font-family: "DejaVu Sans", sans-serif; font-weight: 700; white-space: nowrap; }
.n1, .n2 { font-size: 62px; line-height: 62px; font-family: "Open Sans", sans-serif; font-weight: 800; }
.t1, .t2 { font-size: 26px; line-height: 30px; }
.n1 { left: 234px; top: 482px; }
.t1 { left: 275px; top: 494px; }
.n2 { left: 81px; top: 566px; }
.t2 { left: 9px; top: 634px; }
```
